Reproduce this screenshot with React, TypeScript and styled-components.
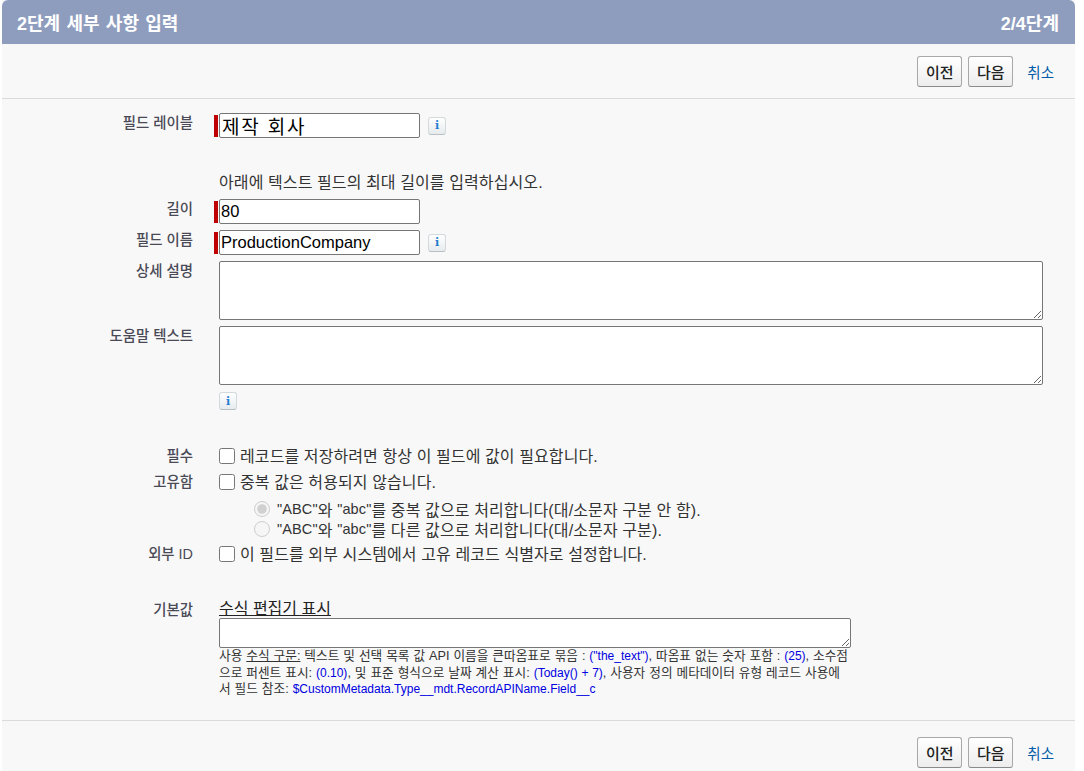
import React, { ReactElement } from 'react'
import styled, { createGlobalStyle } from 'styled-components';

const KR = `"Liberation Sans", "Noto Sans CJK KR", Arial, sans-serif`;

const GlobalStyle = createGlobalStyle`
    html, body {
        margin : 0;
        padding : 0;
        background-color : white;
        height : 771px;
        overflow : hidden;
    }
    * {
        box-sizing : border-box;
    }
`;

const Panel = styled.div`
    margin-left : 2px;
    width : 1073px;
    height : 771px;
    background-color : #f8f8f8;
    font-family : ${KR};
    color : #333333;
    overflow : hidden;
`;

const Header = styled.div`
    height : 44px;
    background-color : #8e9dbe;
    border-radius : 6px 6px 0 0;
    display : flex;
    justify-content : space-between;
    align-items : center;
    padding : 0 16px 0 15px;
    color : white;
    font-size : 18px;
    font-weight : bold;
    word-spacing : 1.3px;
`;

const Toolbar = styled.div<{ $top?: boolean }>`
    height : ${p => p.$top ? '55px' : '51px'};
    display : flex;
    justify-content : flex-end;
    align-items : center;
    gap : 6px;
    padding : ${p => p.$top ? '0 21px 0 0' : '12px 21px 0 0'};
    ${p => p.$top ? 'border-bottom : 1px solid #dbdbdb;' : 'border-top : 1px solid #dbdbdb;'}
`;

const Button = styled.button`
    width : 45px;
    height : 31px;
    padding : 0;
    border : 1px solid #a8a8a8;
    border-bottom-color : #8a8a8a;
    border-radius : 3px;
    background : linear-gradient(#ffffff, #ededed);
    font-family : ${KR};
    font-size : 15px;
    font-weight : 500;
    color : #222222;
`;

const CancelLink = styled.a`
    margin-left : 8px;
    font-size : 14.5px;
    color : #015ba7;
`;

const Form = styled.div`
    height : 621px;
    padding-top : 14px;
`;

const Row = styled.div<{ $top?: number }>`
    display : grid;
    grid-template-columns : 191px 1fr;
    column-gap : 26px;
    margin-top : ${p => p.$top ?? 0}px;
`;

const Label = styled.div`
    padding-top : 1px;
    text-align : right;
    font-size : 14.4px;
    line-height : 18px;
    font-weight : 500;
    color : #4a4a56;
`;

const Cell = styled.div`
    display : flex;
    align-items : center;
    gap : 8px;
`;

const RequiredGroup = styled.div`
    display : flex;
    align-items : center;
    margin-left : -5px;
`;

const RequiredBar = styled.div`
    width : 4px;
    height : 22px;
    margin-right : 1px;
    background-color : #c00000;
`;

const TextBox = styled.input<{ $korean?: boolean }>`
    width : 201px;
    height : 25px;
    padding : 0 1px 0 ${p => p.$korean ? '2px' : '1px'};
    border : 1px solid #767676;
    border-radius : 2px;
    background-color : white;
    font-family : ${KR};
    font-size : ${p => p.$korean ? '19px' : '16.5px'};
    letter-spacing : ${p => p.$korean ? '1.8px' : '0'};
    color : black;
    outline : none;
`;

const TextArea = styled.textarea<{ $width: number; $height: number }>`
    display : block;
    width : ${p => p.$width}px;
    height : ${p => p.$height}px;
    padding : 2px;
    border : 1px solid #767676;
    border-radius : 2px;
    background-color : white;
    outline : none;
`;

const InfoIcon = styled.span`
    display : inline-flex;
    flex : none;
    justify-content : center;
    align-items : center;
    width : 18px;
    height : 18px;
    border : 1px solid #d4dadc;
    border-bottom-color : #b9c0c4;
    border-radius : 3px;
    background : linear-gradient(#ffffff, #e6ebee);
    font-family : "DejaVu Serif", serif;
    font-size : 11px;
    font-weight : bold;
    color : #1f7fd0;
`;

const PlainText = styled.div`
    font-size : 16px;
    line-height : 18px;
    letter-spacing : 0.1px;
    color : #333333;
`;

const CheckLine = styled.label`
    display : flex;
    align-items : center;
    font-size : 16px;
    letter-spacing : 0.1px;
    color : #333333;
    height : 18px;
`;

const CheckBox = styled.input`
    width : 16px;
    height : 16px;
    margin : 2px 5px 0 0;
    flex : none;
`;

const RadioLine = styled.label`
    display : flex;
    align-items : center;
    height : 20px;
    padding-left : 35px;
    font-size : 16px;
    letter-spacing : 0.12px;
    color : #333333;
    white-space : pre;
`;

const Latin = styled.span`
    font-size : 14.5px;
`;

const Radio = styled.input`
    width : 16px;
    height : 16px;
    margin : 0 7px 0 0;
    flex : none;
`;

const EditorLink = styled.a`
    display : block;
    font-size : 16px;
    line-height : 18px;
    color : #222222;
    text-decoration : underline;
`;

const Hint = styled.div`
    width : 632px;
    font-size : 12.7px;
    line-height : 16.5px;
    word-spacing : 0.4px;
    color : #333333;
`;

const HintLink = styled.span`
    text-decoration : underline;
`;

const Code = styled.span`
    font-size : 12px;
    color : #0000e0;
`;

function RequiredInput({ value, korean }: { value: string; korean?: boolean }): ReactElement {
    return (
        <RequiredGroup>
            <RequiredBar />
            <TextBox defaultValue={value} $korean={korean} />
        </RequiredGroup>
    );
}

function Actions({ top }: { top?: boolean }): ReactElement {
    return (
        <Toolbar $top={top}>
            <Button>이전</Button>
            <Button>다음</Button>
            <CancelLink>취소</CancelLink>
        </Toolbar>
    );
}

export default function App(): ReactElement {
    return (
        <Panel>
            <GlobalStyle />
            <Header>
                <div>2단계 세부 사항 입력</div>
                <div>2/4단계</div>
            </Header>
            <Actions top />
            <Form>
                <Row>
                    <Label>필드 레이블</Label>
                    <Cell>
                        <RequiredInput value="제작 회사" korean />
                        <InfoIcon>i</InfoIcon>
                    </Cell>
                </Row>
                <Row $top={36}>
                    <div />
                    <PlainText>아래에 텍스트 필드의 최대 길이를 입력하십시오.</PlainText>
                </Row>
                <Row $top={7}>
                    <Label>길이</Label>
                    <Cell>
                        <RequiredInput value="80" />
                    </Cell>
                </Row>
                <Row $top={6}>
                    <Label>필드 이름</Label>
                    <Cell>
                        <RequiredInput value="ProductionCompany" />
                        <InfoIcon>i</InfoIcon>
                    </Cell>
                </Row>
                <Row $top={6}>
                    <Label>상세 설명</Label>
                    <TextArea $width={824} $height={59} />
                </Row>
                <Row $top={6}>
                    <Label>도움말 텍스트</Label>
                    <TextArea $width={824} $height={59} />
                </Row>
                <Row $top={7}>
                    <div />
                    <Cell>
                        <InfoIcon>i</InfoIcon>
                    </Cell>
                </Row>
                <Row $top={36}>
                    <Label>필수</Label>
                    <CheckLine><CheckBox type="checkbox" />레코드를 저장하려면 항상 이 필드에 값이 필요합니다.</CheckLine>
                </Row>
                <Row $top={7}>
                    <Label>고유함</Label>
                    <CheckLine><CheckBox type="checkbox" />중복 값은 허용되지 않습니다.</CheckLine>
                </Row>
                <Row $top={8}>
                    <div />
                    <div>
                        <RadioLine><Radio type="radio" disabled defaultChecked name="case" /><Latin>"ABC"</Latin>와 <Latin>"abc"</Latin>를 중복 값으로 처리합니다(대/소문자 구분 안 함).</RadioLine>
                        <RadioLine><Radio type="radio" disabled name="case" /><Latin>"ABC"</Latin>와 <Latin>"abc"</Latin>를 다른 값으로 처리합니다(대/소문자 구분).</RadioLine>
                    </div>
                </Row>
                <Row $top={5}>
                    <Label>외부 ID</Label>
                    <CheckLine><CheckBox type="checkbox" />이 필드를 외부 시스템에서 고유 레코드 식별자로 설정합니다.</CheckLine>
                </Row>
                <Row $top={37}>
                    <Label>기본값</Label>
                    <div>
                        <EditorLink>수식 편집기 표시</EditorLink>
                        <TextArea $width={632} $height={30} />
                        <Hint>
                            사용 <HintLink>수식 구문:</HintLink> 텍스트 및 선택 목록 값 API 이름을 큰따옴표로 묶음 : <Code>("the_text")</Code>, 따옴표 없는 숫자 포함 : <Code>(25)</Code>, 소수점으로 퍼센트 표시: <Code>(0.10)</Code>, 및 표준 형식으로 날짜 계산 표시: <Code>(Today() + 7)</Code>, 사용자 정의 메타데이터 유형 레코드 사용에서 필드 참조: <Code>$CustomMetadata.Type__mdt.RecordAPIName.Field__c</Code>
                        </Hint>
                    </div>
                </Row>
            </Form>
            <Actions />
        </Panel>
    )
}
